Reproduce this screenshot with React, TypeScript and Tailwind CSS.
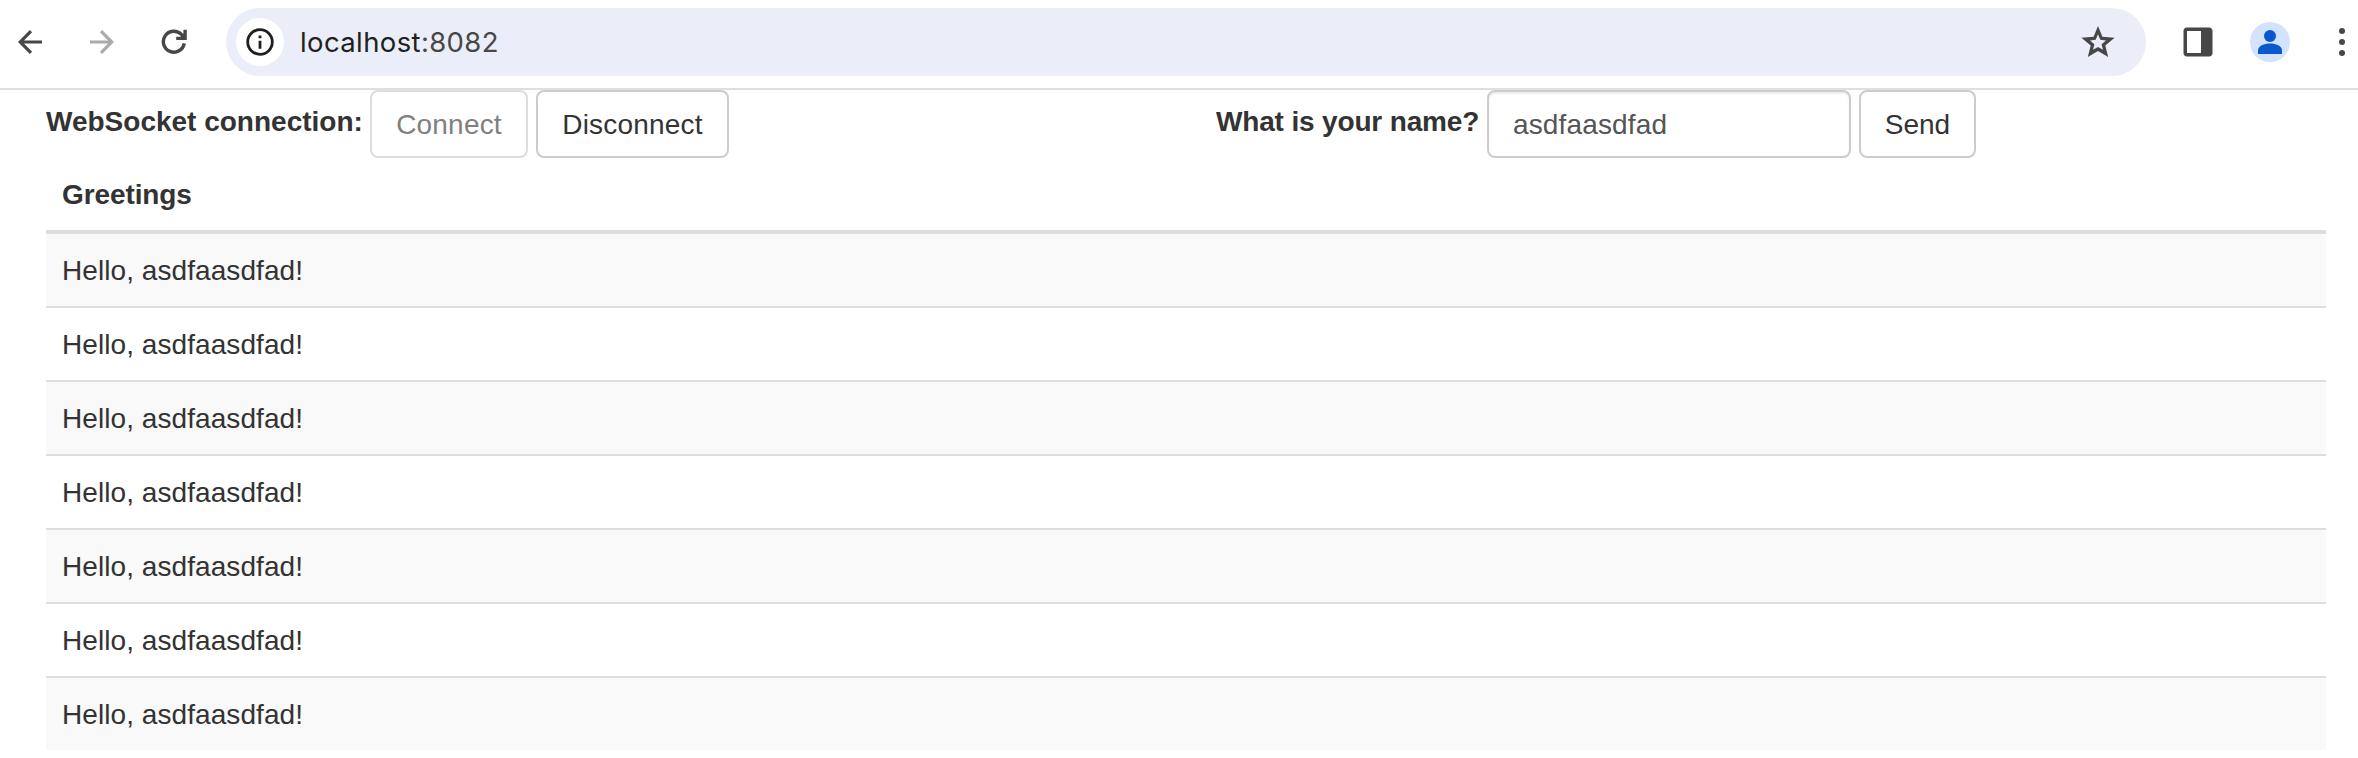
const greetings = Array.from({ length: 7 }, () => "Hello, asdfaasdfad!");

function BackArrow() {
  return (
    <svg width="24" height="24" viewBox="0 0 24 24" fill="none" stroke="currentColor" strokeWidth="3.2">
      <path d="M24 12H2.5M13 1.2L2.2 12L13 22.8" />
    </svg>
  );
}

function Toolbar() {
  return (
    <header className="flex h-[90px] items-start border-b-2 border-[#dfdfdf] bg-white text-[#474747]">
      <div className="flex h-[84px] items-center pl-[18px]">
        <BackArrow />
        <span className="ml-12 rotate-180 text-[#ababab]">
          <BackArrow />
        </span>
        <svg className="ml-[47px]" width="26" height="26" viewBox="0 0 26 26" fill="none" stroke="currentColor" strokeWidth="3.4">
          <path d="M23.2 14.4A10.5 10.5 0 1 1 20.4 5.4L23 8" />
          <path d="M15.2 9.4H24.1V0.8" />
          <path d="M18.4 9.4L23 4.8V9.4Z" fill="currentColor" strokeWidth="1" />
        </svg>
      </div>
      <div className="mt-2 ml-[39px] flex h-[68px] w-[1920px] items-center rounded-full bg-[#ebeef8] pr-[31px] pl-[10px]">
        <span className="flex size-12 items-center justify-center rounded-full bg-white text-[#1f1f1f]">
          <svg width="28" height="28" viewBox="0 0 28 28" fill="none" stroke="currentColor">
            <circle cx="14" cy="14" r="12.3" strokeWidth="2.8" />
            <path d="M14 12.7V20.8M14 7.4V10.2" strokeWidth="2.8" />
          </svg>
        </span>
        <span className="ml-4 font-['Inter',sans-serif] text-[27.5px] leading-9 tracking-[0.38px] text-[#1f1f1f]">
          localhost<span className="text-[#474747]">:8082</span>
        </span>
        <svg className="ml-auto" width="34" height="34" viewBox="0 0 34 34" fill="currentColor">
          <path
            fillRule="evenodd"
            d="M17 1L21.4 11.7L33.6 12.8L24.3 20.6L27.2 32L17 25.9L6.8 32L9.7 20.6L.4 12.8L12.6 11.7ZM17 9.2L14.7 14.8L9 15.4L13.4 19.2L12 24.8L17 21.9L22 24.8L20.6 19.2L25 15.4L19.3 14.8Z"
          />
        </svg>
      </div>
      <div className="flex h-[84px] items-center pl-[37px]">
        <svg width="30" height="30" viewBox="0 0 30 30" fill="currentColor">
          <path fillRule="evenodd" d="M4 .5H26A3.3 3.3 0 0 1 29.5 4V26A3.3 3.3 0 0 1 26 29.5H4A3.3 3.3 0 0 1 .5 26V4A3.3 3.3 0 0 1 4 .5ZM4 4V26H18V4Z" />
        </svg>
        <svg className="ml-[37px]" width="40" height="40" viewBox="0 0 40 40">
          <circle cx="20" cy="20" r="20" fill="#d3e3fd" />
          <circle cx="20" cy="14" r="6" fill="#0b57d0" />
          <path d="M8 32V28.2C8 24.2 14 21.5 20 21.5S32 24.2 32 28.2V32Z" fill="#0b57d0" />
        </svg>
        <svg className="ml-[49px]" width="6" height="28" viewBox="0 0 6 28" fill="currentColor">
          <circle cx="3" cy="3" r="3" />
          <circle cx="3" cy="14" r="3" />
          <circle cx="3" cy="25" r="3" />
        </svg>
      </div>
    </header>
  );
}

export default function App() {
  return (
    <div className="h-[758px] overflow-hidden bg-white font-['Liberation_Sans',Arial,sans-serif] text-[28px] leading-10 text-[#333333]">
      <Toolbar />
      <main className="pr-8 pl-[46px]">
        <div className="flex h-[68px]">
          <form className="flex w-[1170px] items-start" onSubmit={(e) => e.preventDefault()}>
            <label className="mt-3 w-[324px] font-bold whitespace-nowrap">WebSocket connection:</label>
            <button disabled className="h-[68px] w-[158px] rounded-lg border-2 border-[#dddddd] pt-px tracking-[0.2px] text-[#808080]">
              Connect
            </button>
            <button className="ml-2 h-[68px] w-[193px] rounded-lg border-2 border-[#cccccc] pt-px tracking-[0.2px]">Disconnect</button>
          </form>
          <form className="flex items-start" onSubmit={(e) => e.preventDefault()}>
            <label className="mt-3 w-[271px] font-bold tracking-[-0.16px] whitespace-nowrap">What is your name?</label>
            <input
              defaultValue="asdfaasdfad"
              className="h-[68px] w-[364px] rounded-lg border-2 border-[#cccccc] px-6 pt-0.5 tracking-[0.14px] text-[#555555] shadow-[inset_0_2px_2px_rgba(0,0,0,0.075)] outline-none"
            />
            <button className="ml-2 h-[68px] w-[117px] rounded-lg border-2 border-[#cccccc] pt-px">Send</button>
          </form>
        </div>
        <table className="w-full border-separate border-spacing-0 text-left">
          <thead>
            <tr>
              <th className="h-[76px] border-b-4 border-[#dddddd] px-4 pt-0.5 pb-0 font-bold tracking-[-0.1px]">Greetings</th>
            </tr>
          </thead>
          <tbody>
            {greetings.map((text, i) => (
              <tr key={i} className="tracking-[0.07px] odd:bg-[#f9f9f9]">
                <td className={i === greetings.length - 1 ? "h-[72px] px-4 pt-0.5 pb-0" : "h-[74px] border-b-2 border-[#dddddd] px-4 pt-0.5 pb-0"}>
                  {text}
                </td>
              </tr>
            ))}
          </tbody>
        </table>
      </main>
    </div>
  );
}
